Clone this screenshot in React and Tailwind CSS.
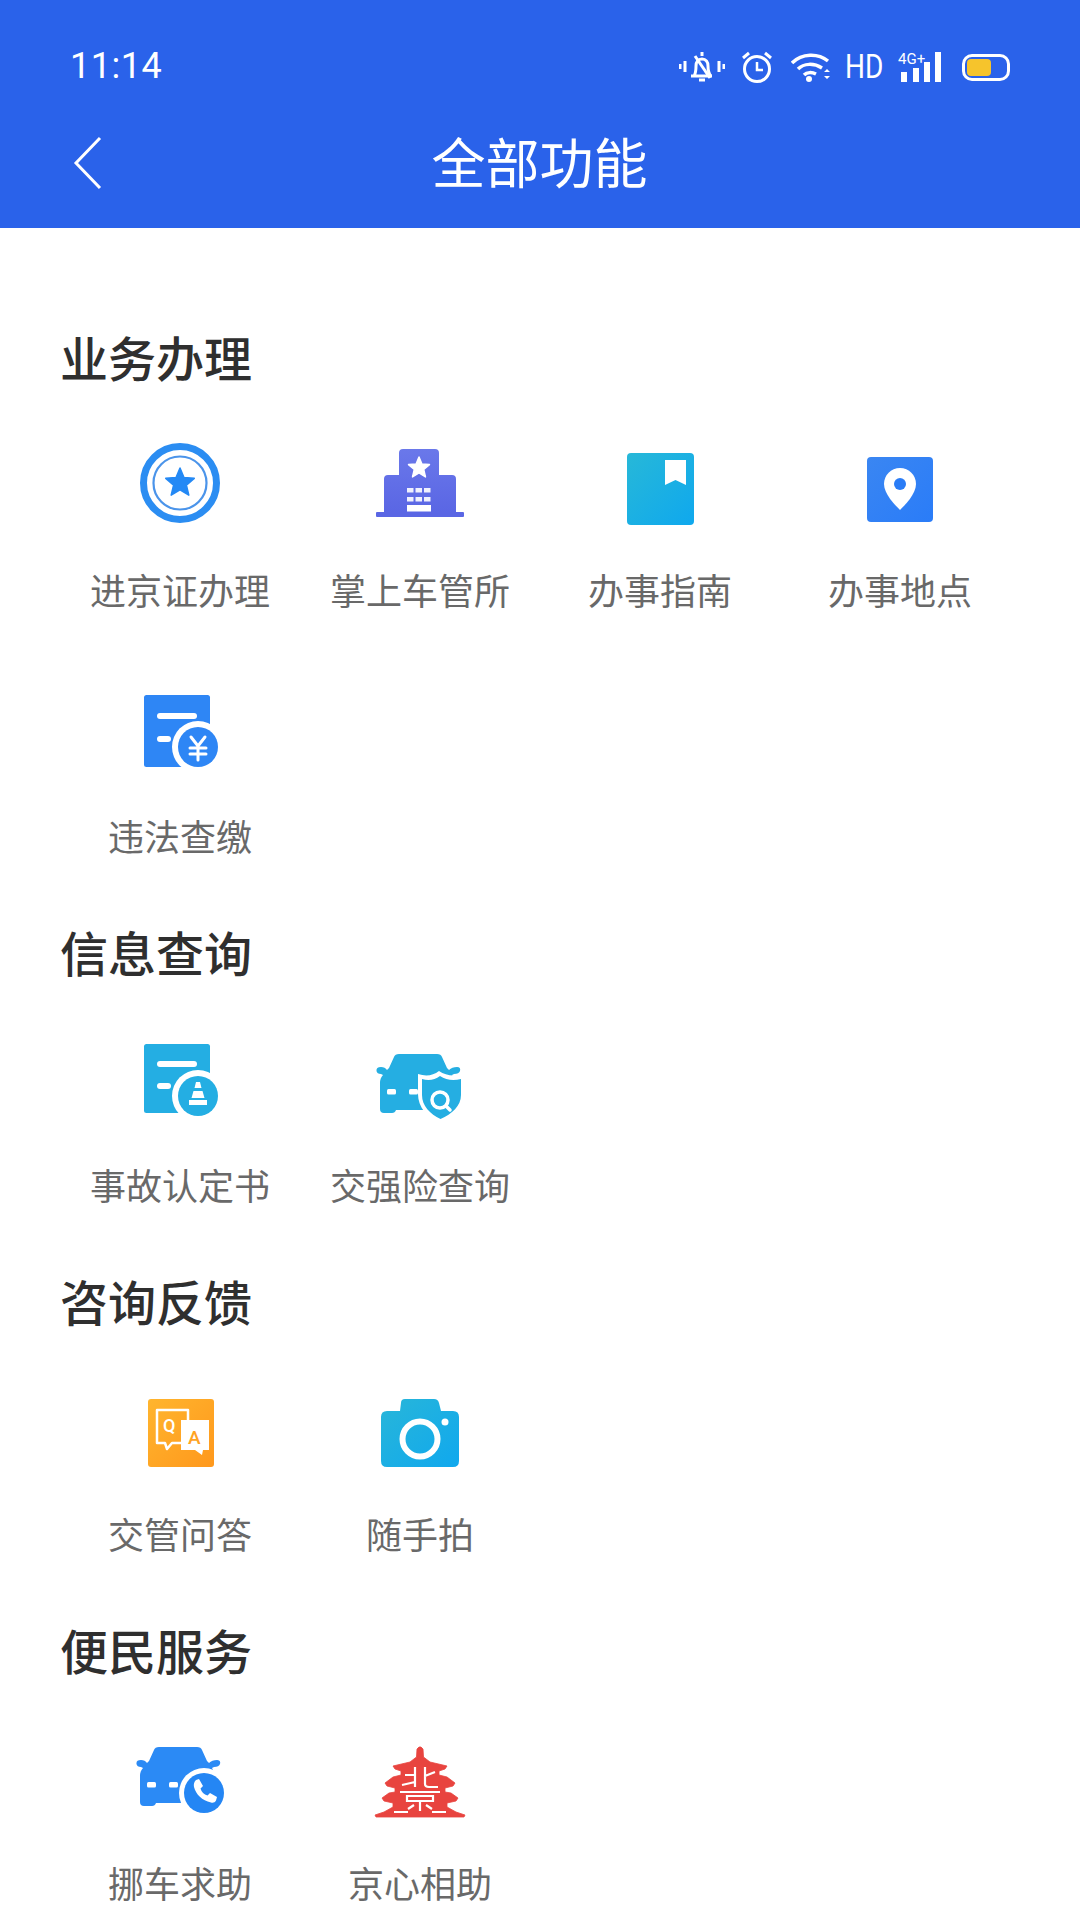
import React from "react";

const font = { fontFamily: '"Noto Sans CJK SC", "Noto Sans", sans-serif' };

function Icon({ children }) {
  return (
    <svg viewBox="0 0 100 100" className="w-[100px] h-[100px] block" fill="none">
      {children}
    </svg>
  );
}

function Star({ cx, cy, r, fill }) {
  const pts = [];
  for (let i = 0; i < 10; i++) {
    const rad = i % 2 === 0 ? r : r * 0.45;
    const a = -Math.PI / 2 + (i * Math.PI) / 5;
    pts.push(`${(cx + rad * Math.cos(a)).toFixed(2)},${(cy + rad * Math.sin(a)).toFixed(2)}`);
  }
  return <polygon points={pts.join(" ")} fill={fill} stroke={fill} strokeWidth="1.5" strokeLinejoin="round" />;
}

const BadgeIcon = () => (
  <Icon>
    <circle cx="50" cy="46" r="36.5" stroke="#2b8df2" strokeWidth="7" />
    <circle cx="50" cy="46" r="26.5" stroke="#4b94ea" strokeWidth="2.2" />
    <Star cx={50} cy={46} r={15} fill="#2489f5" />
  </Icon>
);

const BuildingIcon = () => (
  <Icon>
    <defs>
      <linearGradient id="bld" x1="0" y1="0" x2="0" y2="1">
        <stop offset="0" stopColor="#6a78ea" />
        <stop offset="1" stopColor="#5a66e4" />
      </linearGradient>
    </defs>
    <path d="M29 16q0-4 4-4h32q4 0 4 4v22h13q4 0 4 4v34H14V42q0-4 4-4h11z" fill="url(#bld)" />
    <rect x="6" y="75" width="88" height="5" rx="1" fill="#5a66e4" />
    <Star cx={49} cy={31} r={11} fill="#fff" />
    {[51, 60].map((y) =>
      [37, 45.5, 54].map((x) => <rect key={`${x}${y}`} x={x} y={y} width="6.5" height="4.5" fill="#fff" opacity="0.9" />)
    )}
    <rect x="37" y="68" width="24" height="6.5" fill="#fff" />
  </Icon>
);

const BookIcon = () => (
  <Icon>
    <defs>
      <linearGradient id="bk" x1="0" y1="0" x2="1" y2="1">
        <stop offset="0" stopColor="#27b8d8" />
        <stop offset="1" stopColor="#0fa8ee" />
      </linearGradient>
    </defs>
    <rect x="17" y="16" width="67" height="72" rx="4" fill="url(#bk)" />
    <path d="M55 23h21v25l-10.500-5L55 48z" fill="#fff" />
  </Icon>
);

const PinIcon = () => (
  <Icon>
    <defs>
      <linearGradient id="pn" x1="0" y1="0" x2="1" y2="1">
        <stop offset="0" stopColor="#3a86f2" />
        <stop offset="1" stopColor="#2a7cf8" />
      </linearGradient>
    </defs>
    <rect x="17" y="20" width="66" height="65" rx="4" fill="url(#pn)" />
    <path d="M50 31c-9 0-16 7-16 16 0 10 11 21 16 26 5-5 16-16 16-26 0-9-7-16-16-16z" fill="#fff" />
    <circle cx="50" cy="47" r="6" fill="#2a7cf6" />
  </Icon>
);

function Doc({ color, y, bar1, bar2, h, children }) {
  return (
    <Icon>
      <rect x="14" y={y} width="66" height={h} rx="2.500" fill={color} />
      <rect x="27" y={bar1} width="40" height="6" rx="3" fill="#fff" />
      <rect x="27" y={bar2} width="14" height="6" rx="3" fill="#fff" />
      <circle cx="68" cy="64" r="26" fill="#fff" />
      <circle cx="68" cy="64" r="20" fill={color} />
      {children}
    </Icon>
  );
}

const FineIcon = () => (
  <Doc color="#2e86f5" y={12} h={72} bar1={30} bar2={53}>
    <path d="M61 54l7 9 7-9M60 65h16M60 71h16M68 63v14" stroke="#fff" strokeWidth="3" strokeLinecap="round" />
  </Doc>
);

const AccidentIcon = () => (
  <Doc color="#24aee3" y={12} h={69} bar1={29} bar2={51}>
    <path d="M66 50h4l1.500 6h-7zM63.500 59h9l2 7h-13z" fill="#fff" />
    <rect x="59" y="68" width="18" height="5" fill="#fff" />
  </Doc>
);

function CarBody({ color, dy = 0 }) {
  return (
    <g transform={`translate(0 ${dy})`}>
      <path
        d="M24 20Q25 17 29 17H67Q71 17 72 20L77 31L79 33Q82 30 87 30Q91 30 90 34Q89 37 84 37L82 38Q85 42 85 47V70Q85 76 80 76H72Q69 76 68 73H26Q25 76 22 76H14Q10 76 10 72V46Q10 41 13 38L11 37Q7 37 6.500 34Q6 30 11 30Q15 30 17 33L19 31Z"
        fill={color}
      />
      <rect x="17" y="52" width="9" height="5.500" rx="1.500" fill="#fff" />
      <rect x="39" y="52" width="9" height="5.500" rx="1.500" fill="#fff" />
    </g>
  );
}

const CarShieldIcon = () => (
  <Icon>
    <CarBody color="#25aee2" dy={5} />
    <path d="M48 42q12 4 21-3 10 7 25 3v20c0 13-11 24-24 29-13-5-22-16-22-29z" fill="#fff" />
    <path d="M52 47q10 3 18-3 9 6 21 3v16c0 11-9 19-20.500 24C60 82 52 74 52 63z" fill="#25aee2" />
    <circle cx="70" cy="68" r="8" stroke="#fff" strokeWidth="3.500" />
    <path d="M76 74l4 4" stroke="#fff" strokeWidth="3.500" strokeLinecap="round" />
  </Icon>
);

const QaIcon = () => (
  <Icon>
    <defs>
      <linearGradient id="qa" x1="0" y1="0" x2="1" y2="1">
        <stop offset="0" stopColor="#ffb52e" />
        <stop offset="1" stopColor="#ff981c" />
      </linearGradient>
    </defs>
    <rect x="18" y="18" width="66" height="68" rx="3" fill="url(#qa)" />
    <path d="M27 29h31v33H42l-5 6-2-6h-8z" stroke="#fff" strokeWidth="2.500" strokeLinejoin="round" />
    <path d="M51 39h28v30h-6l-1 5-7-5H51z" fill="#fff" />
    <text x="33" y="51" fontSize="18" fontFamily="Roboto, sans-serif" fontWeight="500" fill="#fff">
      Q
    </text>
    <text x="58" y="63" fontSize="19" fontFamily="Roboto, sans-serif" fontWeight="500" fill="#ffa424">
      A
    </text>
  </Icon>
);

const CameraIcon = () => (
  <Icon>
    <defs>
      <linearGradient id="cam" x1="0" y1="0" x2="1" y2="1">
        <stop offset="0" stopColor="#28b6d9" />
        <stop offset="1" stopColor="#10a8ee" />
      </linearGradient>
    </defs>
    <path
      d="M31 22q0-4 4-4h29q4 0 5 4l2 8h12q6 0 6 6v44q0 6-6 6H17q-6 0-6-6V36q0-6 6-6h13z"
      fill="url(#cam)"
    />
    <circle cx="50" cy="58" r="17.500" stroke="#fff" strokeWidth="6" />
    <circle cx="75" cy="41" r="3.500" fill="#fff" />
  </Icon>
);

const CarPhoneIcon = () => (
  <Icon>
    <CarBody color="#2b8af5" />
    <circle cx="74" cy="63" r="25" fill="#fff" />
    <circle cx="74" cy="63" r="20" fill="#2486f4" />
    <path
      d="M66 50l3-1 4 7-2.500 2.500c1 3.500 3.500 6 7 7L80 63l7 4-1 3.500c-1 2-3 2.500-5 2-9-2-15-8-17-15.500-.5-2.500 0-5.500 2-7z"
      fill="#fff"
    />
  </Icon>
);

// Half profile of the pagoda (offset from the axis, height); mirrored into one outline.
const towerProfile = [
  [1, 17], [3, 19], [3.500, 27], [10, 32], [27, 36], [25, 39], [19, 41], [19, 45],
  [27, 47], [35, 53], [33, 56], [25, 58], [25, 62], [31, 63], [38, 68], [36, 71],
  [27, 73], [27, 77], [36, 82], [45, 85], [44, 87],
];
const towerOutline =
  "M" +
  [...towerProfile.map(([o, y]) => `${50 + o} ${y}`), ...[...towerProfile].reverse().map(([o, y]) => `${50 - o} ${y}`)].join("L") +
  "Z";

const TowerIcon = () => (
  <Icon>
    <path d={towerOutline} fill="#e8443f" stroke="#e8443f" strokeWidth="0.8" strokeLinejoin="round" />
    <path
      d="M35 45h10M45 37v20M32 55l13-3M55 37v17q0 3 4 3h9M55 46l10-4M30 62h40M37 66h26v5H37zM50 71v10M38 79l6-4M62 79l-6-4M24 82h14M62 82h14"
      stroke="#fff"
      strokeWidth="2.200"
    />
  </Icon>
);

const sections = [
  {
    title: "业务办理",
    items: [
      ["进京证办理", BadgeIcon],
      ["掌上车管所", BuildingIcon],
      ["办事指南", BookIcon],
      ["办事地点", PinIcon],
      ["违法查缴", FineIcon],
    ],
  },
  {
    title: "信息查询",
    items: [
      ["事故认定书", AccidentIcon],
      ["交强险查询", CarShieldIcon],
    ],
  },
  {
    title: "咨询反馈",
    items: [
      ["交管问答", QaIcon],
      ["随手拍", CameraIcon],
    ],
  },
  {
    title: "便民服务",
    items: [
      ["挪车求助", CarPhoneIcon],
      ["京心相助", TowerIcon],
    ],
  },
];

function StatusIcons() {
  return (
    <div className="flex items-center text-white mt-[8px]">
      <svg width="46" height="32" viewBox="0 0 46 32" fill="none" stroke="#fff" strokeWidth="3">
        <path d="M1 13v5M6 10v11M40 10v11M45 13v5" />
        <path d="M12 25h21M15 25c2-3 2-6 2-10 0-4 2-7 6-7s6 3 6 7c0 4 0 7 3 10" strokeLinejoin="round" />
        <path d="M16 5l15 22" />
        <path d="M20 29h6" />
        <path d="M23 1v4" />
      </svg>
      <svg className="ml-[16px]" width="32" height="32" viewBox="0 0 32 32" fill="none" stroke="#fff" strokeWidth="3">
        <circle cx="16" cy="18" r="12.500" />
        <path d="M16 11v8h6" strokeWidth="2.500" />
        <path d="M2 7l6-5M30 7l-6-5" />
      </svg>
      <svg className="ml-[18px]" width="42" height="32" viewBox="0 0 42 32" fill="none" stroke="#fff" strokeWidth="3.500">
        <path d="M1 12C11 2 27 2 37 10" />
        <path d="M7 18c6-6 16-6 24-1" />
        <path d="M13 24c3-3 8-3 12-1" />
        <circle cx="18" cy="28" r="3" fill="#fff" stroke="none" />
        <path d="M33 21l3-3 3 3zM33 25l3 3 3-3z" fill="#fff" stroke="none" />
      </svg>
      <span
        className="ml-[12px] text-[33px] leading-[32px] text-white scale-x-[0.85] origin-left w-[40px]"
        style={{ fontFamily: "Roboto, sans-serif" }}
      >
        HD
      </span>
      <svg className="ml-[13px]" width="44" height="32" viewBox="0 0 44 32" fill="#fff">
        <rect x="3" y="21" width="6" height="10" />
        <rect x="15" y="17" width="6" height="14" />
        <rect x="26" y="11" width="6" height="20" />
        <rect x="37" y="1" width="6" height="30" />
        <text x="0" y="13" fontSize="15" fontFamily="Roboto, sans-serif" fill="#fff">
          4G+
        </text>
      </svg>
      <div className="ml-[20px] w-[48px] h-[27px] rounded-[10px] border-[3px] border-white p-[2px] flex">
        <div className="w-[24px] h-full rounded-[4px] bg-[#f6c42c]" />
      </div>
    </div>
  );
}

export default function App() {
  return (
    <div className="w-[1080px] h-[1920px] overflow-hidden bg-white" style={font}>
      <header className="h-[228px] bg-[#2a62ea] px-[70px] text-white">
        <div className="h-[132px] pt-[43px] flex items-start justify-between">
          <span className="text-[36px] leading-[46px] tracking-[0.5px]" style={{ fontFamily: "Roboto, sans-serif" }}>
            11:14
          </span>
          <StatusIcons />
        </div>
        <div className="relative h-[64px] flex items-center justify-center -mt-[3px]">
          <svg className="absolute left-[3px] top-[7px]" width="30" height="54" viewBox="0 0 30 54" fill="none">
            <path d="M27 2L3 27l24 25" stroke="#fff" strokeWidth="3" />
          </svg>
          <h1 className="text-[54px] leading-[64px] font-normal -ml-[1px]">全部功能</h1>
        </div>
      </header>

      <main className="pt-[101px] pl-[60px]">
        {sections.map((section) => (
          <section key={section.title} className="pb-[64px]">
            <h2 className="h-[60px] leading-[54px] text-[48px] font-medium text-[#2f2f2f]">{section.title}</h2>
            <div className="mt-[48px] grid grid-cols-4 w-[960px] gap-y-[69px]">
              {section.items.map(([label, Glyph]) => (
                <div key={label} className="flex flex-col items-center">
                  <Glyph />
                  <span className="mt-[27px] h-[50px] leading-[50px] text-[36px] whitespace-nowrap text-[#696969]">{label}</span>
                </div>
              ))}
            </div>
          </section>
        ))}
      </main>
    </div>
  );
}
